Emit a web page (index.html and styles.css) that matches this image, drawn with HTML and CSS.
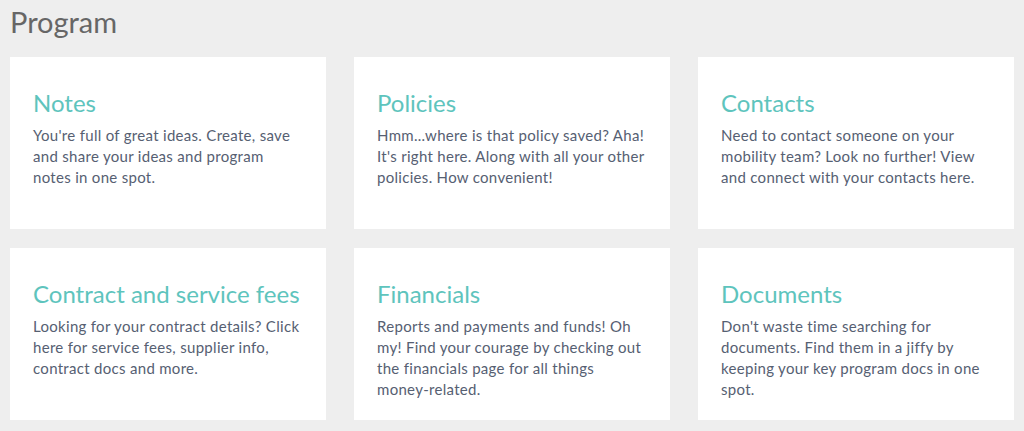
FILE: index.html
```html
<!DOCTYPE html>
<html lang="en">
<head>
<meta charset="utf-8">
<title>Program</title>
<link rel="stylesheet" href="styles.css">
</head>
<body>
<main class="page">
  <h1 class="page-title">Program</h1>
  <section class="grid">
    <article class="card">
      <h2 class="card-title">Notes</h2>
      <p class="card-text">You're full of great ideas. Create, save and share your ideas and program notes in one spot.</p>
    </article>
    <article class="card">
      <h2 class="card-title">Policies</h2>
      <p class="card-text">Hmm...where is that policy saved? Aha! It's right here. Along with all your other policies. How convenient!</p>
    </article>
    <article class="card">
      <h2 class="card-title">Contacts</h2>
      <p class="card-text">Need to contact someone on your mobility team? Look no further! View and connect with your contacts here.</p>
    </article>
    <article class="card">
      <h2 class="card-title">Contract and service fees</h2>
      <p class="card-text">Looking for your contract details? Click here for service fees, supplier info, contract docs and more.</p>
    </article>
    <article class="card">
      <h2 class="card-title">Financials</h2>
      <p class="card-text">Reports and payments and funds! Oh my! Find your courage by checking out the financials page for all things money&#8209;related.</p>
    </article>
    <article class="card">
      <h2 class="card-title">Documents</h2>
      <p class="card-text">Don't waste time searching for documents. Find them in a jiffy by keeping your key program docs in one spot.</p>
    </article>
  </section>
</main>
</body>
</html>
```
FILE: styles.css
```css
html, body {
  margin: 0;
  padding: 0;
  background: #eeeeee;
}
body {
  font-family: Lato, "Liberation Sans", sans-serif;
}
.page {
  padding: 0 10px;
}
.page-title {
  margin: 0;
  padding-top: 4px;
  height: 53px;
  font-size: 29px;
  line-height: 36px;
  font-weight: 400;
  color: #666666;
}
.grid {
  display: grid;
  grid-template-columns: repeat(3, 316px);
  grid-auto-rows: 172px;
  column-gap: 28px;
  row-gap: 19px;
}
.card {
  background: #ffffff;
  padding: 30px 23px 0 23px;
  box-sizing: border-box;
}
.card-title {
  margin: 0 0 6px 0;
  font-size: 24px;
  line-height: 32px;
  font-weight: 400;
  color: #5ec4bd;
}
.card-text {
  margin: 0;
  font-size: 15px;
  letter-spacing: 0.3px;
  line-height: 21px;
  color: #566072;
}
```
